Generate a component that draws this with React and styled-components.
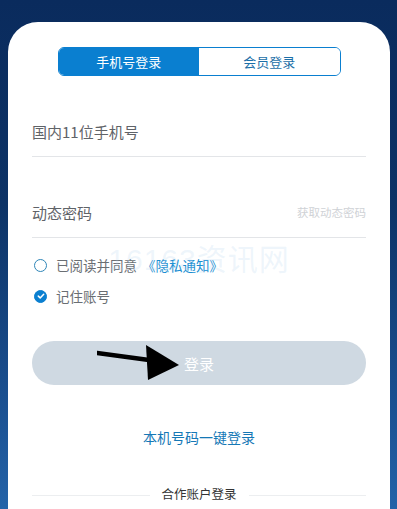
import React, { useState } from 'react';
import styled, { createGlobalStyle } from 'styled-components';

const GlobalStyle = createGlobalStyle`
  html, body {
    margin: 0;
    padding: 0;
  }
  body {
    font-family: "Noto Sans CJK SC", "Noto Sans", sans-serif;
    background: #0b2c5e;
  }
`;

const Page = styled.div`
  width: 397px;
  height: 509px;
  overflow: hidden;
  padding: 22px 7px 0 8px;
  box-sizing: border-box;
  background: linear-gradient(180deg, #0a2b5d 0%, #0d3366 40%, #1b5192 80%, #2463a8 100%);
`;

const Card = styled.div`
  position: relative;
  background: #fff;
  border-radius: 30px 30px 0 0;
  height: 520px;
  padding: 25px 24px 0 24px;
  box-sizing: border-box;
`;

const Tabs = styled.div`
  display: flex;
  width: 283px;
  height: 29px;
  margin: 0 auto;
  border: 1px solid #0a7fd0;
  border-radius: 6px;
  overflow: hidden;
  box-sizing: border-box;
`;

const Tab = styled.div`
  flex: 1;
  display: flex;
  align-items: center;
  justify-content: center;
  font-size: 13px;
  color: ${(p) => (p.$active ? '#fff' : '#1c6fa8')};
  background: ${(p) => (p.$active ? '#0a7fd0' : '#fff')};
`;

const Field = styled.div`
  display: flex;
  align-items: center;
  justify-content: space-between;
  height: 81px;
  border-bottom: 1px solid #e3e5e8;
  box-sizing: border-box;
`;

const FieldLabel = styled.span`
  font-size: 15px;
  color: #5f6368;
  margin-top: 30px;
`;

const FieldAction = styled.span`
  font-size: 11.5px;
  color: #cfd2d6;
  margin-top: 30px;
`;

const Watermark = styled.div`
  position: absolute;
  top: 213px;
  left: 0;
  right: 0;
  text-align: center;
  font-family: "Liberation Sans", "Noto Sans CJK SC", sans-serif;
  font-size: 30px;
  color: rgba(180, 210, 238, 0.22);
  letter-spacing: 1px;
  pointer-events: none;
`;

const Options = styled.div`
  display: flex;
  flex-direction: column;
  gap: 11px;
  padding-top: 17px;
`;

const Option = styled.label`
  display: flex;
  align-items: center;
  gap: 9px;
  font-size: 13.5px;
  color: #6a6e73;
  padding-left: 2px;
  height: 20px;
`;

const Circle = styled.span`
  width: 13px;
  height: 13px;
  border-radius: 50%;
  box-sizing: border-box;
  border: 1.5px solid ${(p) => (p.$checked ? '#0a7fd0' : '#2f86b8')};
  background: ${(p) => (p.$checked ? '#0a7fd0' : '#fff')};
  display: flex;
  align-items: center;
  justify-content: center;
`;

const Link = styled.span`
  color: #1b8fd2;
  margin-left: -4px;
`;

const LoginButton = styled.div`
  margin-top: 35px;
  height: 44px;
  border-radius: 22px;
  background: #cfd9e2;
  color: #fff;
  font-size: 15px;
  display: flex;
  align-items: center;
  justify-content: center;
  position: relative;
`;

const Arrow = styled.svg`
  position: absolute;
  left: 65px;
  top: 2px;
`;

const QuickLogin = styled.div`
  margin-top: 42px;
  text-align: center;
  font-size: 14px;
  color: #1578b6;
`;

const Divider = styled.div`
  display: flex;
  align-items: center;
  gap: 12px;
  margin-top: 37px;
  font-size: 12.5px;
  color: #333;
  &::before,
  &::after {
    content: '';
    flex: 1;
    height: 1px;
    background: #eceef0;
    margin-top: 3px;
  }
`;

const App = () => {
  const [tab] = useState(0);
  return (
    <>
      <GlobalStyle />
      <Page>
        <Card>
          <Tabs>
            <Tab $active={tab === 0}>手机号登录</Tab>
            <Tab $active={tab === 1}>会员登录</Tab>
          </Tabs>
          <Field>
            <FieldLabel>国内11位手机号</FieldLabel>
          </Field>
          <Field>
            <FieldLabel>动态密码</FieldLabel>
            <FieldAction>获取动态密码</FieldAction>
          </Field>
          <Watermark>16163资讯网</Watermark>
          <Options>
            <Option>
              <Circle />
              <span>已阅读并同意</span>
              <Link>《隐私通知》</Link>
            </Option>
            <Option>
              <Circle $checked>
                <svg width="8" height="8" viewBox="0 0 8 8">
                  <path d="M1.3 4.1 L3.2 5.9 L6.7 2.2" fill="none" stroke="#fff" strokeWidth="1.5" strokeLinecap="round" strokeLinejoin="round" />
                </svg>
              </Circle>
              <span>记住账号</span>
            </Option>
          </Options>
          <LoginButton>
            登录
            <Arrow width="90" height="40" viewBox="0 0 90 40">
              <path d="M0 10 L52 17" stroke="#000" strokeWidth="4.5" strokeLinecap="round" />
              <polygon points="49,2 82,22 51,37" fill="#000" />
            </Arrow>
          </LoginButton>
          <QuickLogin>本机号码一键登录</QuickLogin>
          <Divider>合作账户登录</Divider>
        </Card>
      </Page>
    </>
  );
};

export default App;
